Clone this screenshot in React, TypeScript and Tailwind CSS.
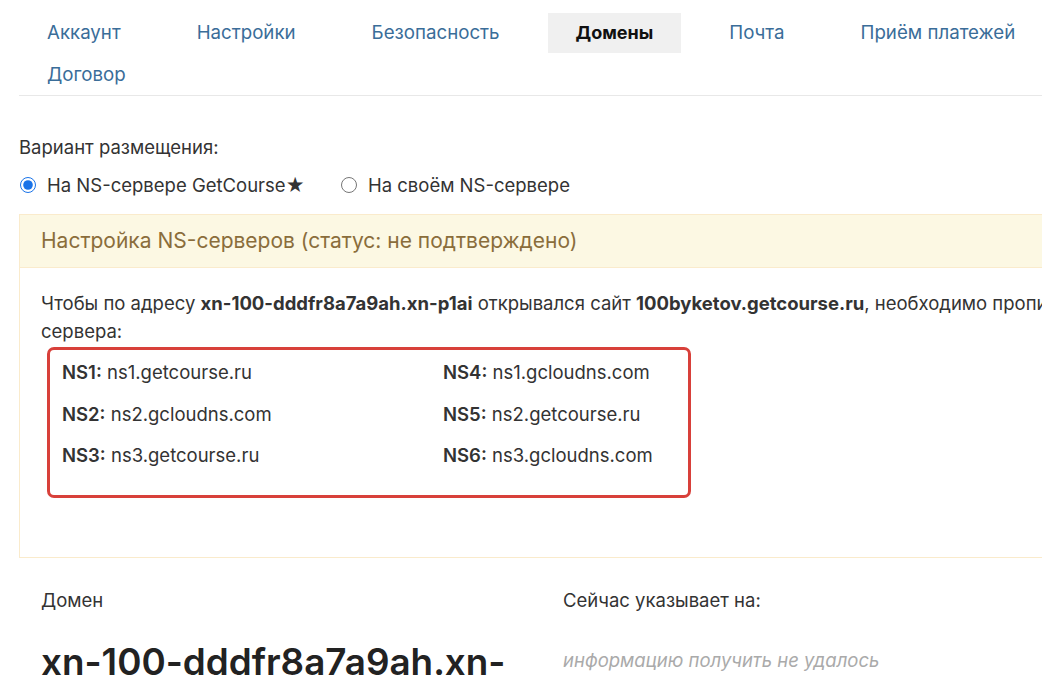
import React from 'react';

const tabRows = [
  ['Аккаунт', 'Настройки', 'Безопасность', 'Домены', 'Почта', 'Приём платежей'],
  ['Договор'],
];

const servers = [
  ['NS1', 'ns1.getcourse.ru', 'NS4', 'ns1.gcloudns.com'],
  ['NS2', 'ns2.gcloudns.com', 'NS5', 'ns2.getcourse.ru'],
  ['NS3', 'ns3.getcourse.ru', 'NS6', 'ns3.gcloudns.com'],
];

export default function App() {
  return (
    <div
      className="w-[1042px] h-[694px] overflow-hidden bg-white text-[#333] text-[18.5px] leading-[28px]"
      style={{ fontFamily: 'Inter, "Noto Sans", sans-serif' }}
    >
      <div className="w-[1200px] pl-[19px]">
        {/* Tabs */}
        <div className="pt-[13px] border-b border-[#e8e8e8] w-[1023px] flex flex-col gap-y-[2px]">
          {tabRows.map((row, i) => (
            <div key={i} className="flex gap-x-5 whitespace-nowrap">
              {row.map((t) => (
                <div
                  key={t}
                  className={`h-10 px-7 flex items-center ${
                    t === 'Домены'
                      ? 'bg-[#f0f0f0] font-bold text-[18px] text-[#111]'
                      : 'text-[18.7px] text-[#3a6d99]'
                  }`}
                >
                  {t}
                </div>
              ))}
            </div>
          ))}
        </div>

        {/* Placement */}
        <div className="mt-[37px]">Вариант размещения:</div>
        <div className="mt-[10px] flex items-center">
          <label className="flex items-center">
            <input type="radio" name="ns" defaultChecked className="w-4 h-4 m-0 ml-[1px] accent-[#1a73e8]" />
            <span className="ml-[11px]">На NS-сервере GetCourse★</span>
          </label>
          <label className="flex items-center ml-[36px]">
            <input type="radio" name="ns" className="w-4 h-4 m-0" />
            <span className="ml-[11px]">На своём NS-сервере</span>
          </label>
        </div>

        {/* Panel */}
        <div className="mt-[15px] border border-[#faebcc]">
          <div className="h-[53px] bg-[#fcf8e3] border-b border-[#faebcc] px-[21px] flex items-center text-[21px] text-[#8a6d3b]">
            Настройка NS-серверов (статус: не подтверждено)
          </div>
          <div className="px-[21px] pt-[21px] pb-[59px]">
            <p className="whitespace-nowrap">
              Чтобы по адресу <b className="font-bold">xn-100-dddfr8a7a9ah.xn-p1ai</b> открывался сайт{' '}
              <b className="font-bold">100byketov.getcourse.ru</b>, необходимо прописать для домена следующие NS-
            </p>
            <p>сервера:</p>
            <div className="mt-[2px] ml-[6px] w-[644px] border-[3px] border-[#d8403a] rounded-[7px] pl-3 pt-2 pb-[26px] flex flex-col gap-[13.5px]">
              {servers.map(([a, b, c, d]) => (
                <div key={a} className="flex">
                  <div className="w-[381px]">
                    <span className="font-semibold">{a}:</span> {b}
                  </div>
                  <div>
                    <span className="font-semibold">{c}:</span> {d}
                  </div>
                </div>
              ))}
            </div>
          </div>
        </div>

        {/* Domain */}
        <div className="mt-[28px] pl-[22px] flex">
          <div className="w-[522px]">
            <div>Домен</div>
            <div className="mt-[26px] text-[36.8px] leading-[44px] font-semibold text-[#222] whitespace-nowrap">
              xn-100-dddfr8a7a9ah.xn-
            </div>
          </div>
          <div>
            <div>Сейчас указывает на:</div>
            <div className="mt-[32px] italic text-[#aaa]">информацию получить не удалось</div>
          </div>
        </div>
      </div>
    </div>
  );
}
